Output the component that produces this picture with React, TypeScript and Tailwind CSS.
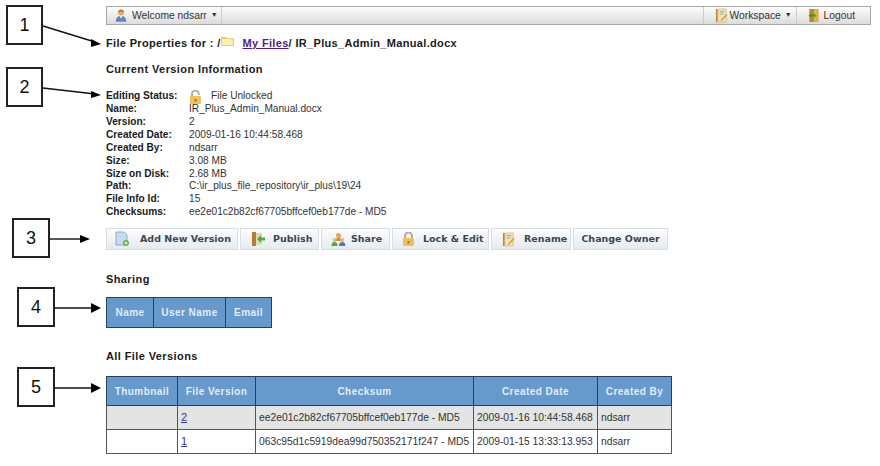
import React from 'react'

const font = "[font-family:'Liberation_Sans',Arial,sans-serif]"

const UserIcon = () => (
  <svg width="14" height="15" viewBox="0 0 16 16">
    <circle cx="8" cy="4.5" r="3.5" fill="#e8a868" />
    <path d="M4 4 Q8 -1 12 4 Q8 2.5 4 4Z" fill="#a8642c" />
    <path d="M2 15 Q2 8.5 8 8.5 Q14 8.5 14 15Z" fill="#5c84c4" />
    <path d="M6.5 8.5 L8 12 L9.5 8.5Z" fill="#e9eef5" />
  </svg>
)

const WorkspaceIcon = () => (
  <svg width="13" height="15" viewBox="0 0 14 16">
    <path d="M1 1h2v14H1z" fill="#c9853a" />
    <path d="M3 1h9v14H3z" fill="#f3e6b4" stroke="#c9a35a" strokeWidth="0.6" />
    <path d="M5 4h5M5 6.5h4" stroke="#7e9cc8" strokeWidth="1" />
    <path d="M6 13 L12 6 L13.5 7.5 L7.5 14Z" fill="#e2a33c" />
  </svg>
)

const LogoutIcon = () => (
  <svg width="12" height="15" viewBox="0 0 12 16">
    <path d="M1 1h5v14H1z" fill="#b98a2e" />
    <path d="M6 1h5v14H6z" fill="#d8b24a" />
    <path d="M0 8l4-3v2h4v2H4v2z" fill="#3f9a3f" />
  </svg>
)

const FolderIcon = () => (
  <svg width="13" height="10" viewBox="0 0 13 10">
    <path d="M0 1h5l1 1h7v8H0z" fill="#eecb6c" />
    <path d="M1 3h11v6H1z" fill="#fbeeb2" />
  </svg>
)

const LockIcon = ({ open }: { open?: boolean }) => (
  <svg width="13" height="14" viewBox="0 0 13 14" className="shrink-0">
    <path
      d={open ? 'M3 7V4a3.4 3.4 0 0 1 6.8 0v1' : 'M3 7V4a3.5 3.5 0 0 1 7 0v3'}
      fill="none"
      stroke="#b0aea2"
      strokeWidth="2"
    />
    <rect x="1" y="6" width="11" height="8" rx="1" fill="#f0c158" />
    <rect x="5.5" y="9" width="2" height="2.5" fill="#a87820" />
  </svg>
)

const AddVersionIcon = () => (
  <svg width="15" height="16" viewBox="0 0 15 16">
    <path d="M1 1h8l3 3v10H1z" fill="#c6daf0" stroke="#7f9fc6" strokeWidth="0.8" />
    <circle cx="11" cy="12" r="3" fill="#69ad4a" />
    <path d="M9.5 12h3M11 10.5v3" stroke="#fff" strokeWidth="1" />
  </svg>
)

const PublishIcon = () => (
  <svg width="15" height="16" viewBox="0 0 15 16">
    <path d="M1 1h4v14H1z" fill="#b9793a" />
    <path d="M5 2h6v12H5z" fill="#e9d9a8" />
    <path d="M6 8l4-4v2.5h4v3h-4V12z" fill="#57a845" />
  </svg>
)

const ShareIcon = () => (
  <svg width="15" height="15" viewBox="0 0 15 15">
    <circle cx="7.5" cy="3.5" r="2.6" fill="#e3a860" />
    <path d="M4 9q0-3 3.5-3T11 9z" fill="#d08a35" />
    <circle cx="3.6" cy="8" r="2" fill="#e8bb7c" />
    <path d="M0.5 14q0-4 3-4t3 4z" fill="#5aa545" />
    <circle cx="11.2" cy="8" r="2" fill="#e8bb7c" />
    <path d="M8 14q0-4 3.2-4t3.2 4z" fill="#4f78bd" />
  </svg>
)

const Callout = ({ n, className }: { n: number; className: string }) => (
  <div
    className={`absolute flex items-center justify-center border-2 border-[#222] bg-white text-[18px] text-[#111] ${className}`}
  >
    {n}
  </div>
)

const Arrow = ({ d, head }: { d: string; head: string }) => (
  <>
    <path d={d} stroke="#111" strokeWidth="1.4" fill="none" />
    <polygon points={head} fill="#000" />
  </>
)

const Heading = ({ children, className }: { children: React.ReactNode; className?: string }) => (
  <h2 className={`text-[11px] leading-[13px] font-bold tracking-[0.4px] text-[#1a1a1a] ${className ?? ''}`}>{children}</h2>
)

const infoRows = [
  ['Name:', 'IR_Plus_Admin_Manual.docx'],
  ['Version:', '2'],
  ['Created Date:', '2009-01-16 10:44:58.468'],
  ['Created By:', 'ndsarr'],
  ['Size:', '3.08 MB'],
  ['Size on Disk:', '2.68 MB'],
  ['Path:', 'C:\\ir_plus_file_repository\\ir_plus\\19\\24'],
  ['File Info Id:', '15'],
  ['Checksums:', 'ee2e01c2b82cf67705bffcef0eb177de - MD5'],
]

const ActionButton = ({ icon, label, className }: { icon?: React.ReactNode; label: string; className: string }) => (
  <button
    className={`flex h-[22px] items-center whitespace-nowrap border border-[#d8dde2] bg-linear-to-b from-[#fbfcfd] to-[#e6ebf0] text-[9.5px] font-bold text-[#3c4650] [font-family:'DejaVu_Sans',sans-serif] ${className}`}
  >
    {icon}
    <span>{label}</span>
  </button>
)

const thClass = 'border border-[#2b3f5c] bg-[#6699cc] text-center text-[10px] font-bold tracking-[0.45px] text-[#e3ecf5]'
const tdClass = 'whitespace-nowrap border border-[#555] px-[3px] text-[10.3px] text-[#333]'

const versions = [
  { v: '2', sum: 'ee2e01c2b82cf67705bffcef0eb177de - MD5', date: '2009-01-16 10:44:58.468', by: 'ndsarr', shade: true },
  { v: '1', sum: '063c95d1c5919dea99d750352171f247 - MD5', date: '2009-01-15 13:33:13.953', by: 'ndsarr', shade: false },
]

export default function App() {
  return (
    <div className={`relative h-[466px] w-[880px] overflow-hidden bg-white pl-[106px] pt-[6px] ${font}`}>
      <Callout n={1} className="left-[6px] top-[5px] h-[40px] w-[37px]" />
      <Callout n={2} className="left-[6px] top-[67px] h-[40px] w-[37px]" />
      <Callout n={3} className="left-[12px] top-[218px] h-[40px] w-[38px]" />
      <Callout n={4} className="left-[17px] top-[287px] h-[40px] w-[38px]" />
      <Callout n={5} className="left-[17px] top-[367px] h-[40px] w-[38px]" />
      <svg className="absolute left-0 top-0" width="106" height="466">
        <Arrow d="M43 26 L95 42" head="101,44 91,39 91,47" />
        <Arrow d="M43 88 L95 94" head="101,95 91,91 91,98" />
        <Arrow d="M50 239 L82 239" head="80,235 90,239 80,243" />
        <Arrow d="M55 308 L93 308" head="91,303 101,308 91,313" />
        <Arrow d="M55 388 L93 388" head="91,383 101,388 91,393" />
      </svg>

      <div className="flex h-[19px] w-[765px] items-stretch justify-between border border-[#a8a8a8] bg-linear-to-b from-[#fdfdfd] to-[#dcdcdc] text-[10.3px] text-[#333]">
        <div className="flex items-center gap-[4px] border-r border-[#ccc] pl-[7px] pr-[3px]">
          <UserIcon />
          <span>Welcome ndsarr</span>
          <span className="text-[7px]">▼</span>
        </div>
        <div className="flex">
          <div className="flex w-[93px] items-center border-l border-[#ccc] pl-[11px]">
            <WorkspaceIcon />
            <span className="ml-[2px]">Workspace</span>
            <span className="ml-[4px] text-[7px]">▼</span>
          </div>
          <div className="flex items-center gap-[4px] border-l border-[#ccc] pl-[11px] pr-[15px]">
            <LogoutIcon />
            <span>Logout</span>
          </div>
        </div>
      </div>

      <div className="mt-[11px] flex items-center text-[11px] leading-[13px] font-bold tracking-[0.33px] text-[#1a1a1a]">
        <span>File Properties for : /</span>
        <span className="mb-[5px] mr-[9px]"><FolderIcon /></span>
        <a className="text-[#551a8b] underline">My Files</a>
        <span>/ IR_Plus_Admin_Manual.docx</span>
      </div>

      <Heading className="mt-[12px]">Current Version Information</Heading>

      <div className="mt-[14px] grid grid-cols-[83px_1fr] text-[10.15px] leading-[12.9px] text-[#333]">
        <span className="font-bold text-[#1a1a1a]">Editing Status:</span>
        <span className="flex h-[13px] items-center gap-[9px]"><LockIcon open /> File Unlocked</span>
        {infoRows.map(([label, value]) => (
          <React.Fragment key={label}>
            <span className="font-bold text-[#1a1a1a]">{label}</span>
            <span>{value}</span>
          </React.Fragment>
        ))}
      </div>

      <div className="mt-[9px] flex gap-[2px]">
        <ActionButton className="w-[132px] gap-[10px] pl-[8px]" icon={<AddVersionIcon />} label="Add New Version" />
        <ActionButton className="w-[79px] gap-[7px] pl-[10px]" icon={<PublishIcon />} label="Publish" />
        <ActionButton className="w-[69px] gap-[5px] pl-[9px]" icon={<ShareIcon />} label="Share" />
        <ActionButton className="w-[97px] gap-[8px] pl-[9px]" icon={<LockIcon />} label="Lock & Edit" />
        <ActionButton className="w-[80px] gap-[9px] pl-[10px]" icon={<WorkspaceIcon />} label="Rename" />
        <ActionButton className="w-[95px] justify-center" label="Change Owner" />
      </div>

      <Heading className="mt-[23px]">Sharing</Heading>

      <table className="mt-[11px] w-[165px] table-fixed border-collapse">
        <thead>
          <tr className="h-[30px]">
            <th className={`${thClass} w-[47px]`}>Name</th>
            <th className={`${thClass} w-[72px]`}>User Name</th>
            <th className={`${thClass} w-[46px]`}>Email</th>
          </tr>
        </thead>
      </table>

      <Heading className="mt-[22px]">All File Versions</Heading>

      <table className="mt-[13px] w-[565px] table-fixed border-collapse">
        <thead>
          <tr className="h-[29px]">
            <th className={`${thClass} w-[71px]`}>Thumbnail</th>
            <th className={`${thClass} w-[78px]`}>File Version</th>
            <th className={`${thClass} w-[218px]`}>Checksum</th>
            <th className={`${thClass} w-[124px]`}>Created Date</th>
            <th className={`${thClass} w-[74px]`}>Created By</th>
          </tr>
        </thead>
        <tbody>
          {versions.map((row) => (
            <tr key={row.v} className={`h-[24px] ${row.shade ? 'bg-[#e4e4e4]' : 'bg-white'}`}>
              <td className={tdClass}></td>
              <td className={tdClass}>
                <a className="text-[#33339a] underline text-[11px]">{row.v}</a>
              </td>
              <td className={tdClass}>{row.sum}</td>
              <td className={tdClass}>{row.date}</td>
              <td className={tdClass}>{row.by}</td>
            </tr>
          ))}
        </tbody>
      </table>
    </div>
  )
}
